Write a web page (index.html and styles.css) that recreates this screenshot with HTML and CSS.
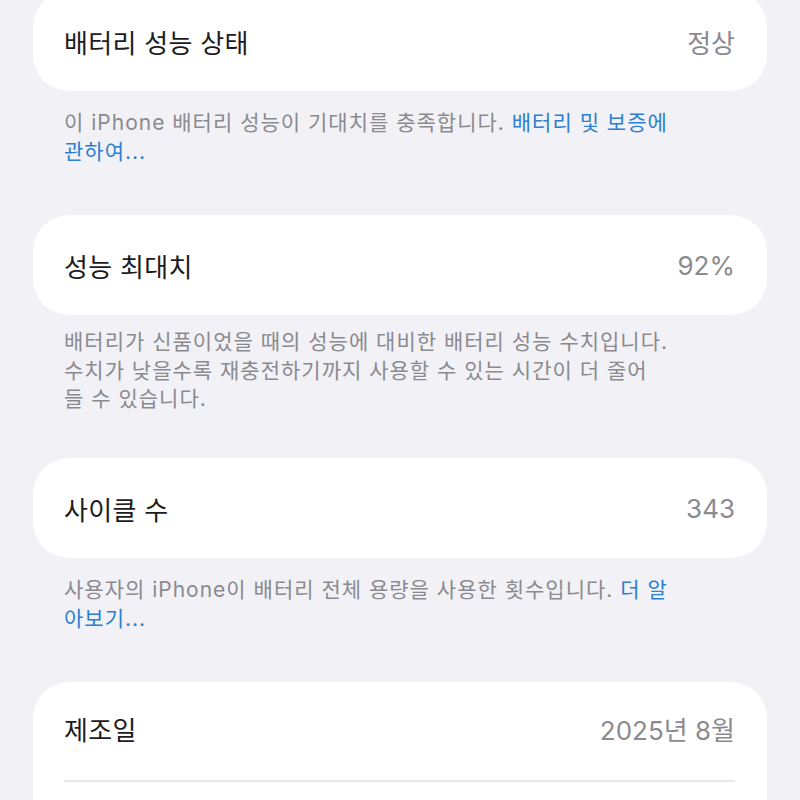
FILE: index.html
```html
<!DOCTYPE html>
<html lang="ko">
<head>
<meta charset="utf-8">
<link rel="stylesheet" href="styles.css">
</head>
<body>
<div class="page">
  <section class="group">
    <div class="card">
      <div class="row"><span class="label">배터리 성능 상태</span><span class="value">정상</span></div>
    </div>
    <p class="footer">이 iPhone 배터리 성능이 기대치를 충족합니다. <span class="link">배터리 및 보증에<br>관하여...</span></p>
  </section>
  <section class="group group-tight">
    <div class="card">
      <div class="row"><span class="label">성능 최대치</span><span class="value">92%</span></div>
    </div>
    <p class="footer">배터리가 신품이었을 때의 성능에 대비한 배터리 성능 수치입니다.<br>수치가 낮을수록 재충전하기까지 사용할 수 있는 시간이 더 줄어<br>들 수 있습니다.</p>
  </section>
  <section class="group">
    <div class="card">
      <div class="row"><span class="label">사이클 수</span><span class="value">343</span></div>
    </div>
    <p class="footer">사용자의 iPhone이 배터리 전체 용량을 사용한 횟수입니다. <span class="link">더 알<br>아보기...</span></p>
  </section>
  <section class="group">
    <div class="card">
      <div class="row row-sep"><span class="label">제조일</span><span class="value">2025년 8월</span></div>
      <div class="row"></div>
    </div>
  </section>
</div>
</body>
</html>
```

FILE: styles.css
```css
html, body {
  margin: 0;
  padding: 0;
  background: #f1f1f6;
  overflow: hidden;
}
body {
  font-family: "Inter", "Noto Sans CJK KR", "Noto Sans", sans-serif;
  -webkit-font-smoothing: antialiased;
}
.page {
  width: 734px;
  margin: -9px 0 0 33px;
}
.group {
  margin-bottom: 49px;
}
.card {
  background: #ffffff;
  border-radius: 36px;
  padding: 0 32px 0 31px;
}
.row {
  height: 100px;
  display: flex;
  align-items: center;
  justify-content: space-between;
}
.row-sep {
  height: 92px;
  padding-bottom: 6px;
  border-bottom: 2px solid #e6e6eb;
}
.label {
  font-family: "Noto Sans CJK KR", sans-serif;
  font-size: 26px;
  color: #1c1c1e;
  letter-spacing: 0.3px;
}
.value {
  font-size: 26px;
  color: #8a8a8f;
}
.footer {
  margin: 0;
  padding: 18px 31px 0;
  font-size: 21px;
  line-height: 28.5px;
  letter-spacing: 1px;
  color: #8a8a8f;
  white-space: nowrap;
}
.group-tight {
  margin-bottom: 44.5px;
}
.group-tight .footer {
  padding-top: 13px;
}
.link {
  color: #2d7fd1;
}
```
